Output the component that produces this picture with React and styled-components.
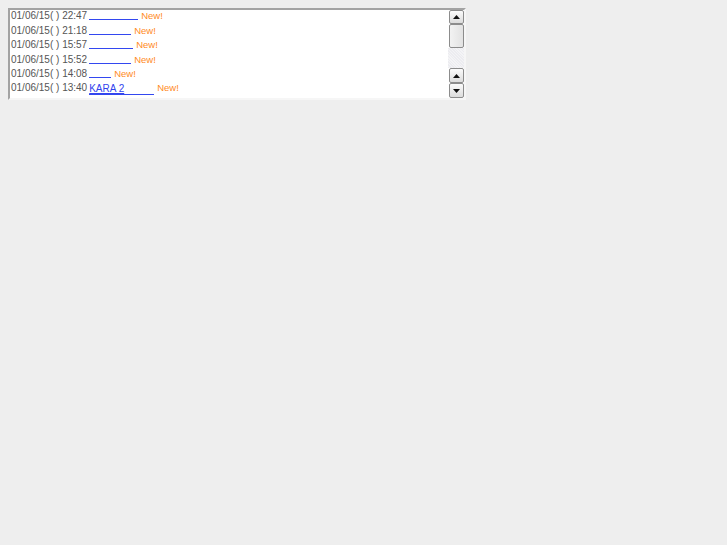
import React from "react";
import styled, { createGlobalStyle } from "styled-components";

const GlobalStyle = createGlobalStyle`
  body {
    margin: 8px;
    background: #eeeeee;
    font-family: "Liberation Sans", Arial, sans-serif;
  }
`;

const Frame = styled.div`
  width: 454px;
  height: 88px;
  border: 2px solid;
  border-color: #a3a3a3 #f6f6f6 #f6f6f6 #a3a3a3;
  background: #ffffff;
  display: flex;
  overflow: hidden;
`;

const List = styled.div`
  flex: 1;
  margin-top: -2px;
  padding-left: 1px;
  overflow: hidden;
`;

const Row = styled.div`
  height: 14.6px;
  line-height: 14.6px;
  font-size: 10px;
  color: #555555;
  white-space: nowrap;
`;

const Link = styled.a`
  display: inline-block;
  min-width: ${({ $w }) => $w}px;
  height: 11px;
  line-height: 11px;
  color: #3344ee;
  border-bottom: 1px solid #3348f0;
  vertical-align: -1px;
  margin-left: 2px;
`;

const NewMark = styled.span`
  color: #ff8a1e;
  font-size: 9.5px;
  margin-left: 3px;
`;

const Scrollbar = styled.div`
  width: 16px;
  display: flex;
  flex-direction: column;
  padding-left: 1px;
  box-sizing: border-box;
`;

const Btn = styled.div`
  width: 13px;
  height: ${({ $h }) => $h || 13}px;
  border: 1px solid #8c8c8c;
  border-radius: 2px;
  background: linear-gradient(#fbfbfb, #dcdcdc);
  display: flex;
  align-items: center;
  justify-content: center;
`;

const Thumb = styled.div`
  width: 13px;
  height: 22px;
  border: 1px solid #8c8c8c;
  border-radius: 2px;
  background: linear-gradient(90deg, #f2f2f2, #e2e2e2);
`;

const Track = styled.div`
  flex: 1;
  margin-left: -1px;
  background-color: #f4f4f6;
  background-image: repeating-linear-gradient(45deg, #ececf0 0 1px, transparent 1px 2px);
`;

const Arrow = ({ down }) => (
  <svg width="7" height="4" viewBox="0 0 7 4">
    <path d={down ? "M0 0h7L3.5 4z" : "M3.5 0L7 4H0z"} fill="#111" />
  </svg>
);

const rows = [
  { time: "22:47", w: 49 },
  { time: "21:18", w: 42 },
  { time: "15:57", w: 44 },
  { time: "15:52", w: 42 },
  { time: "14:08", w: 22 },
  { time: "13:40", w: 65, text: "KARA 2" },
  { time: "13:31", w: 40 },
];

export default function App() {
  return (
    <>
      <GlobalStyle />
      <Frame>
        <List>
          {rows.map((r, i) => (
            <Row key={i}>
              01/06/15( ) {r.time}
              <Link href="#" $w={r.w}>{r.text || ""}</Link>
              <NewMark>New!</NewMark>
            </Row>
          ))}
        </List>
        <Scrollbar>
          <Btn $h={12}><Arrow /></Btn>
          <Thumb />
          <Track />
          <Btn><Arrow /></Btn>
          <Btn><Arrow down /></Btn>
        </Scrollbar>
      </Frame>
    </>
  );
}
